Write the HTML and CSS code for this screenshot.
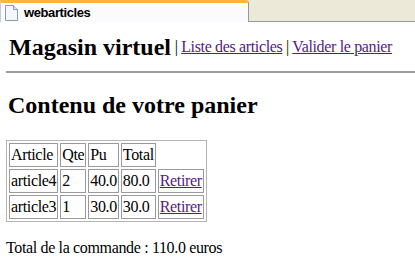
FILE: index.html
```
<!DOCTYPE html>
<html lang="fr">
<head>
<meta charset="utf-8">
<title>webarticles</title>
<link rel="stylesheet" href="styles.css">
</head>
<body>
<div class="tabbar">
  <div class="tab">
    <svg class="doc" width="13" height="16" viewBox="0 0 13 16">
      <path d="M0.5 0.5 H8.5 L12.5 4.5 V15.5 H0.5 Z" fill="#f4f7fc" stroke="#8a9bb5"/>
      <path d="M8.5 0.5 V4.5 H12.5" fill="#dfe6f1" stroke="#8a9bb5"/>
    </svg>
    <span class="tabtitle">webarticles</span>
  </div>
  <div class="tabfill"></div>
</div>
<div class="page">
  <div class="header">
    <span class="brand">Magasin virtuel</span>
    <span class="nav">&nbsp;| <a href="#">Liste des articles</a> | <a href="#">Valider le panier</a></span>
  </div>
  <div class="rule"></div>
  <h2 class="title">Contenu de votre panier</h2>
  <table class="cart">
    <tr><td>Article</td><td>Qte</td><td>Pu</td><td>Total</td><td class="empty"></td></tr>
    <tr><td>article4</td><td>2</td><td>40.0</td><td>80.0</td><td><a href="#">Retirer</a></td></tr>
    <tr><td>article3</td><td>1</td><td>30.0</td><td>30.0</td><td><a href="#">Retirer</a></td></tr>
  </table>
  <p class="sum">Total de la commande : 110.0 euros</p>
</div>
</body>
</html>
```
FILE: styles.css
```
html, body {
  margin: 0;
  padding: 0;
  background: #ffffff;
}
body {
  font-family: "Liberation Serif", "Times New Roman", serif;
  font-size: 16px;
  color: #000;
}
.tabbar {
  display: flex;
  height: 22px;
  background: #ece9d8;
}
.tab {
  width: 249px;
  box-sizing: border-box;
  height: 22px;
  background: #fbfbfd;
  border-top: 3px solid #ffb634;
  border-left: 1px solid #c8ccd0;
  border-right: 1px solid #919b9c;
  border-top-right-radius: 3px;
  display: flex;
  align-items: center;
  padding-left: 4px;
}
.doc {
  display: block;
  margin-top: 1px;
}
.tabtitle {
  font-family: "Liberation Sans", Arial, sans-serif;
  font-weight: bold;
  font-size: 13px;
  letter-spacing: -0.4px;
  margin-left: 6px;
  color: #000;
}
.tabfill {
  flex: 1;
  border-bottom: 1px solid #919b9c;
}
.page {
  padding: 11px 0 0 6px;
}
.header {
  display: flex;
  align-items: center;
  padding-left: 3px;
  height: 28px;
}
.brand {
  font-weight: bold;
  font-size: 24px;
  line-height: 28px;
}
.nav {
  letter-spacing: -0.35px;
  line-height: 18px;
}
a {
  color: #551a8b;
}
.rule {
  margin-top: 10px;
  height: 2px;
  background: #9c9c9c;
}
.title {
  margin: 18px 0 0 2px;
  font-size: 24px;
  line-height: 28px;
  font-weight: bold;
}
.cart {
  margin-top: 21px;
  border-collapse: separate;
  border-spacing: 2px;
  border: 1px solid #b4b4b4;
  letter-spacing: -0.35px;
}
.cart td {
  border: 1px solid #9a9a9a;
  padding: 1px;
  line-height: 20px;
}
.cart td.empty {
  border: none;
}
.sum {
  margin: 17px 0 0 0;
  letter-spacing: -0.35px;
  line-height: 18px;
}
```
